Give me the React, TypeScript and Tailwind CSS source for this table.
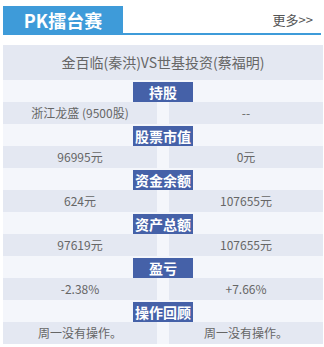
import React from "react";

const font = { fontFamily: '"Noto Sans CJK SC", "Noto Sans", sans-serif' };

const rows: { label: string; left: string; right: string }[] = [
  { label: "持股", left: "浙江龙盛 (9500股)", right: "--" },
  { label: "股票市值", left: "96995元", right: "0元" },
  { label: "资金余额", left: "624元", right: "107655元" },
  { label: "资产总额", left: "97619元", right: "107655元" },
  { label: "盈亏", left: "-2.38%", right: "+7.66%" },
  { label: "操作回顾", left: "周一没有操作。", right: "周一没有操作。" },
];

export default function App() {
  return (
    <div className="w-[324px] h-[347px] bg-white pt-[6px]" style={font}>
      <div className="ml-[3px] w-[318px] h-[29px] flex items-stretch justify-between border-b-2 border-[#3e9bd9]">
        <div className="w-[120px] bg-[#3e9bd9] flex items-center justify-center text-white font-bold text-[18px] leading-none">
          PK擂台赛
        </div>
        <div className="flex items-center pr-[8px] text-[13px] text-[#555] leading-none">更多&gt;&gt;</div>
      </div>
      <div className="ml-[3px] mt-[10px] w-[320px] bg-[#f4f6fb]">
        <div className="h-[35px] bg-[#e4e8f2] flex items-center justify-center text-[14px] text-[#666]">
          金百临(秦洪)VS世基投资(蔡福明)
        </div>
        {rows.map((r) => (
          <React.Fragment key={r.label}>
            <div className="h-[22px] pt-[2px] flex justify-center">
              <div className="w-[60px] h-[20px] bg-[#4561a8] text-white font-bold text-[14px] leading-[20px] text-center">
                {r.label}
              </div>
            </div>
            <div className="h-[22px] flex justify-between">
              <div className="w-[154px] bg-[#e4e8f2] flex items-center justify-center text-[#666] text-[12px]">
                {r.left}
              </div>
              <div className="w-[154px] bg-[#e4e8f2] flex items-center justify-center text-[#666] text-[12px]">
                {r.right}
              </div>
            </div>
          </React.Fragment>
        ))}
      </div>
    </div>
  );
}
